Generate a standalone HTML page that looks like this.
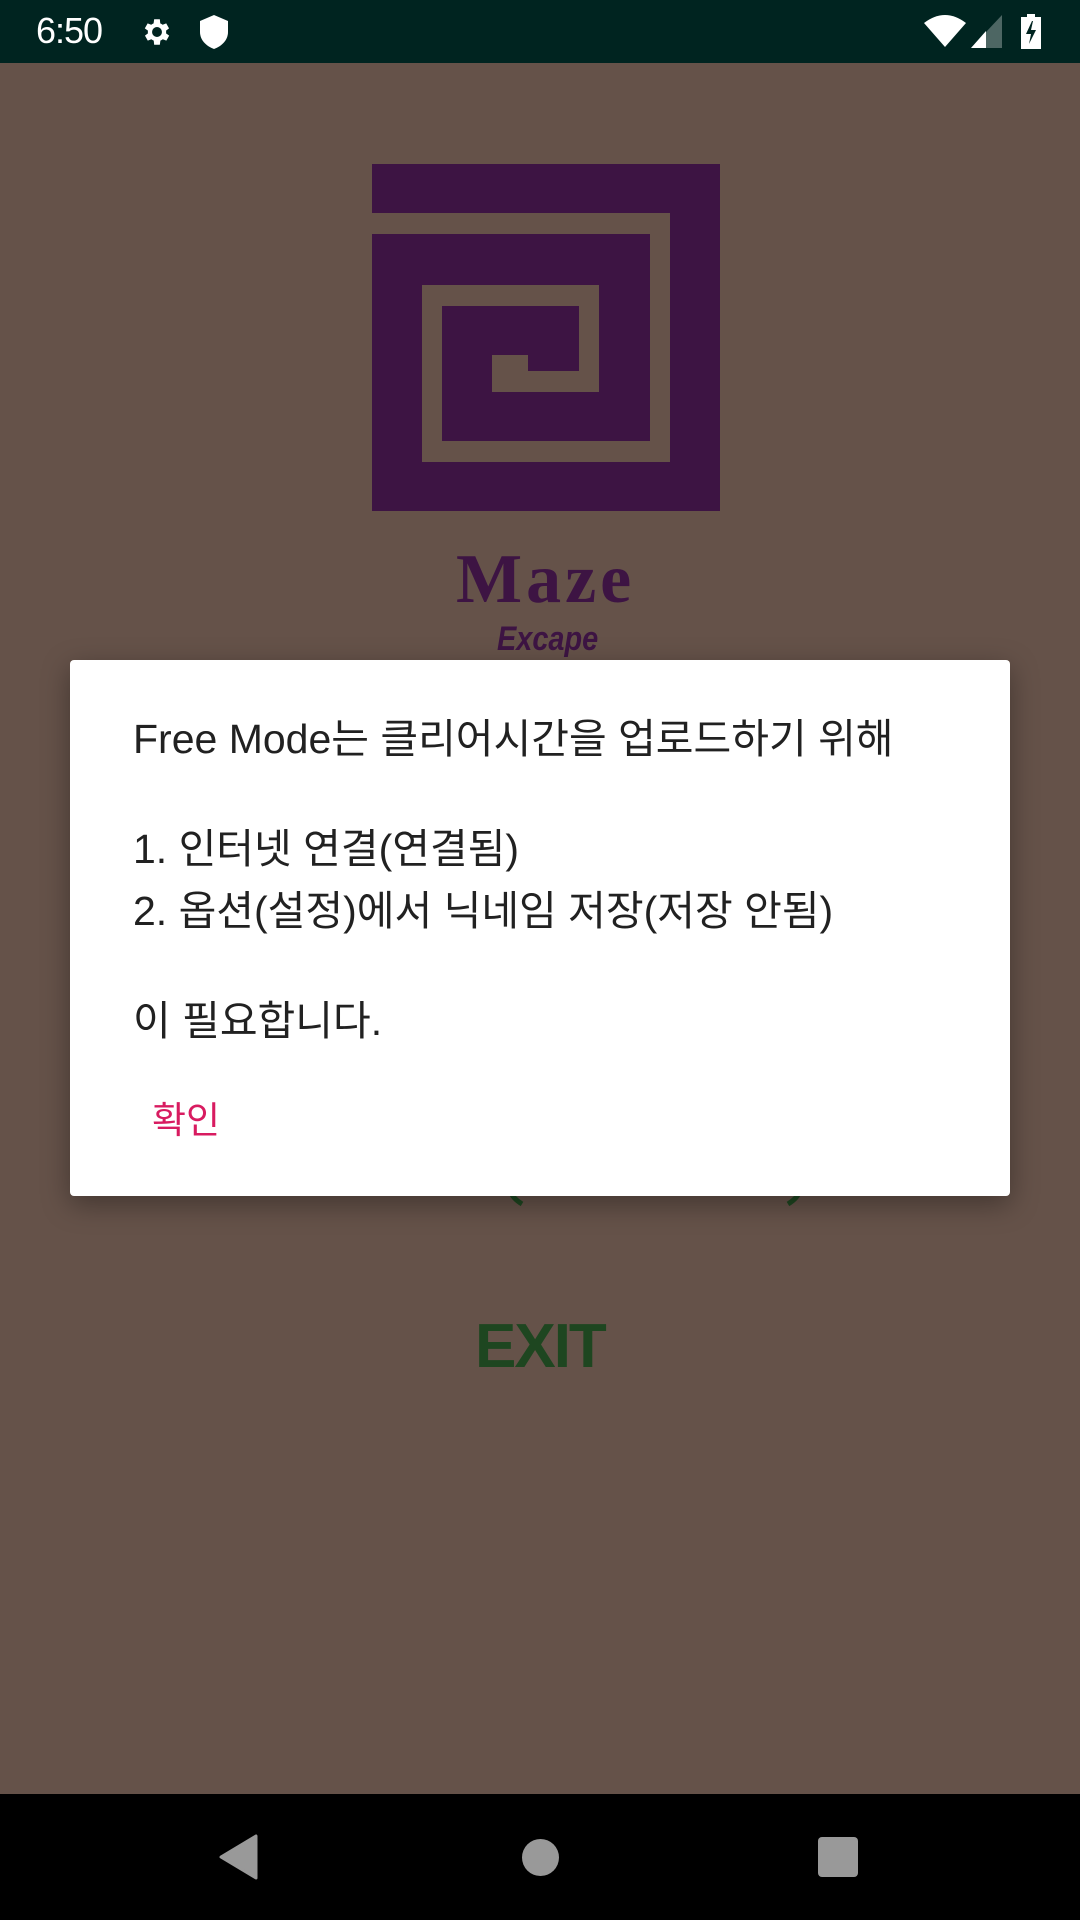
<!DOCTYPE html>
<html><head><meta charset="utf-8">
<style>
*{margin:0;padding:0;box-sizing:border-box}
body{width:1080px;height:1920px;overflow:hidden;background:#655249;position:relative;font-family:"Liberation Sans","Noto Sans CJK KR",sans-serif}
.abs{position:absolute}
.sb{left:0;top:0;width:1080px;height:63px;background:#002420}
.nav{left:0;top:1794px;width:1080px;height:126px;background:#000}
.dlg{left:70px;top:660px;width:940px;height:536px;background:#fff;border-radius:4px;box-shadow:0 8px 28px rgba(0,0,0,.35)}
.t{position:absolute;left:63px;font-size:41px;color:#212121;white-space:nowrap;line-height:1}
</style></head><body>
<div class="abs sb"></div>
<div class="abs" style="left:36px;top:13px;color:#fff;font-size:36px;line-height:36px;letter-spacing:-1px">6:50</div>
<svg class="abs" style="left:140px;top:15px" width="34" height="34" viewBox="0 0 24 24"><path fill="#fff" d="M19.4 13a7.5 7.5 0 000-2l2.1-1.6-2-3.5-2.5 1a7 7 0 00-1.7-1L15 3h-4l-.4 2.9a7 7 0 00-1.7 1l-2.5-1-2 3.5L6.6 11a7.5 7.5 0 000 2l-2.1 1.6 2 3.5 2.5-1a7 7 0 001.7 1L11 21h4l.4-2.9a7 7 0 001.7-1l2.5 1 2-3.5zM13 15.5a3.5 3.5 0 110-7 3.5 3.5 0 010 7z" transform="translate(-1 0)"/></svg>
<svg class="abs" style="left:200px;top:15px" width="28" height="34" viewBox="0 0 28 34"><path fill="#fff" d="M14 0L28 6v11c0 8-6 14-14 17C6 31 0 25 0 17V6z"/></svg>
<svg class="abs" style="left:924px;top:15px" width="42" height="32" viewBox="0 0 42 32"><path fill="#fff" d="M0 8Q21-8 42 8L21 32z"/></svg>
<svg class="abs" style="left:971px;top:15px" width="31" height="33" viewBox="0 0 31 33"><path fill="#fff" d="M31 0V33H0z" opacity=".3"/><path fill="#fff" d="M15 16V33H0z"/></svg>
<svg class="abs" style="left:1021px;top:14px" width="20" height="35" viewBox="0 0 20 35"><path fill="#fff" d="M6 0h8v3h6v32H0V3h6z"/><path fill="#002420" d="M11 7L5 20h5l-2 10 7-14h-5l2-9z"/></svg>

<svg class="abs" style="left:0;top:0" width="1080" height="700">
<rect x="372" y="164" width="348" height="347" fill="#3d1443"/>
<g fill="#655249">
<rect x="372" y="213" width="298" height="21"/>
<rect x="650" y="213" width="20" height="249"/>
<rect x="422" y="441" width="248" height="21"/>
<rect x="422" y="285" width="20" height="177"/>
<rect x="422" y="285" width="177" height="21"/>
<rect x="579" y="285" width="20" height="107"/>
<rect x="492" y="371" width="107" height="21"/>
<rect x="492" y="355" width="36" height="37"/>
</g>
</svg>
<div class="abs" style="left:456px;top:545px;font-family:'Liberation Serif',serif;font-weight:bold;font-size:70px;color:#3d1443;letter-spacing:4px;line-height:70px">Maze</div>
<div class="abs" style="left:497px;top:622px;font-family:'Liberation Sans',sans-serif;font-weight:bold;font-style:italic;font-size:34px;color:#3d1443;line-height:34px;transform:scaleX(.85);transform-origin:left">Excape</div>

<svg class="abs" style="left:500px;top:1190px" width="310" height="20"><path d="M10 0q2 8 12 14M300 0q-2 8-12 14" stroke="#1e4620" stroke-width="5" fill="none"/></svg>
<div class="abs" style="left:475px;top:1316px;font-size:62px;font-weight:bold;color:#1e4620;letter-spacing:-2px;line-height:62px">EXIT</div>

<div class="abs dlg">
<div class="t" style="top:59px">Free Mode는 클리어시간을 업로드하기 위해</div>
<div class="t" style="top:169px">1. 인터넷 연결(연결됨)</div>
<div class="t" style="top:231px">2. 옵션(설정)에서 닉네임 저장(저장 안됨)</div>
<div class="t" style="top:341px">이 필요합니다.</div>
<div class="t" style="left:82px;top:442px;font-size:37px;color:#d81b60">확인</div>
</div>

<div class="abs nav"></div>
<svg class="abs" style="left:218px;top:1834px" width="40" height="46" viewBox="0 0 40 46"><path fill="#999" d="M38 2V44L3 23z" stroke="#999" stroke-width="3" stroke-linejoin="round"/></svg>
<div class="abs" style="left:522px;top:1839px;width:37px;height:37px;border-radius:50%;background:#999"></div>
<div class="abs" style="left:818px;top:1837px;width:40px;height:40px;border-radius:4px;background:#999"></div>
</body></html>
